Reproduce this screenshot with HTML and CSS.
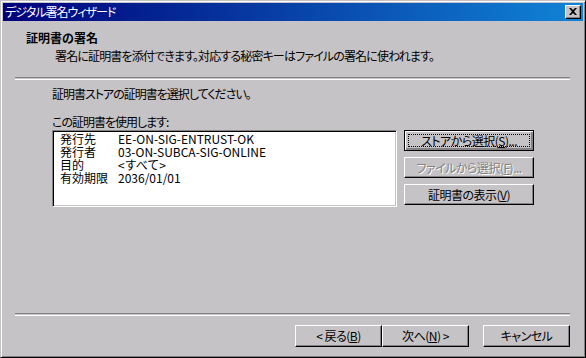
FILE: index.html
```html
<!DOCTYPE html>
<html lang="ja">

<head>
  <meta charset="UTF-8" />
  <title>デジタル署名ウィザード</title>
  <link rel="stylesheet" href="styles.css">
</head>

<body>
  <div class="window">
    <div class="titlebar">
      <span class="title">デジタル署名ウィザード</span>
      <span class="close">
        <svg width="8" height="7" viewBox="0 0 8 7">
          <path d="M0 0h2l2 2 2-2h2L5 3.5 8 7H6L4 5 2 7H0l3-3.5z" fill="#000" />
        </svg>
      </span>
    </div>
    <div class="content">
      <div class="header">
        <div class="heading">証明書の署名</div>
        <div class="subheading">署名に証明書を添付できます。対応する秘密キーはファイルの署名に使われます。</div>
      </div>
      <div class="rule"></div>
      <div class="main">
        <div class="intro">証明書ストアの証明書を選択してください。</div>
        <div class="label">この証明書を使用します:</div>
        <div class="cert-row">
          <div class="cert-box">
            <div class="cert-line"><span class="key">発行先</span><span>EE-ON-SIG-ENTRUST-OK</span></div>
            <div class="cert-line"><span class="key">発行者</span><span>03-ON-SUBCA-SIG-ONLINE</span></div>
            <div class="cert-line"><span class="key">目的</span><span>&lt;すべて&gt;</span></div>
            <div class="cert-line"><span class="key">有効期限</span><span>2036/01/01</span></div>
          </div>
          <div class="side-buttons">
            <button class="btn default"><span class="focus">ストアから選択(<u>S</u>)...</span></button>
            <button class="btn" disabled>ファイルから選択(<u>F</u>)...</button>
            <button class="btn">証明書の表示(<u>V</u>)</button>
          </div>
        </div>
      </div>
      <div class="rule"></div>
      <div class="footer">
        <div class="nav">
          <button class="btn wide">&lt; 戻る(<u>B</u>)</button>
          <button class="btn wide">次へ(<u>N</u>) &gt;</button>
        </div>
        <button class="btn wide">キャンセル</button>
      </div>
    </div>
  </div>
</body>

</html>
```

FILE: styles.css
```css
body {
  margin: 0;
  background: #c6c3c6;
  font-family: "Noto Sans CJK JP", sans-serif;
  font-size: 12px;
  color: #000;
}

.window {
  width: 586px;
  height: 358px;
  box-sizing: border-box;
  padding: 2px;
  border: 1px solid;
  border-color: #c6c3c6 #000 #000 #c6c3c6;
  box-shadow: inset 1px 1px #fff, inset -1px -1px #848284;
  background: #c6c3c6;
  display: flex;
  flex-direction: column;
}

.titlebar {
  height: 18px;
  flex: none;
  background: linear-gradient(to right, #00007b, #1084d6);
  display: flex;
  align-items: center;
  justify-content: space-between;
  padding: 0 2px;
}

.title {
  color: #fff;
  line-height: 18px;
  font-feature-settings: "palt";
  letter-spacing: -1px;
}

.close {
  width: 16px;
  height: 14px;
  box-sizing: border-box;
  background: #c6c3c6;
  border: 1px solid;
  border-color: #fff #000 #000 #fff;
  box-shadow: inset -1px -1px #848284;
  display: flex;
  align-items: center;
  justify-content: center;
  padding: 0 1px 1px 0;
}

.content {
  flex: 1;
  display: flex;
  flex-direction: column;
}

.header {
  padding: 10px 0 0 23px;
  height: 46px;
}

.heading {
  font-weight: bold;
  line-height: 14px;
}

.subheading {
  margin: 4px 0 0 29px;
  line-height: 14px;
  font-feature-settings: "palt";
  letter-spacing: -0.85px;
}

.rule {
  margin: 0 13px 0 12px;
  height: 1px;
  border-top: 1px solid #848284;
  border-bottom: 1px solid #fff;
}

.main {
  padding: 7px 0 0 49px;
  height: 226px;
}

.intro,
.label {
  line-height: 14px;
  font-feature-settings: "palt";
  letter-spacing: -1px;
}

.label {
  margin-top: 14px;
}

.cert-row {
  display: flex;
  align-items: flex-start;
  gap: 7px;
  margin-top: 1px;
}

.cert-box {
  width: 345px;
  height: 77px;
  box-sizing: border-box;
  background: #fff;
  border: 1px solid;
  border-color: #848284 #fff #fff #848284;
  box-shadow: inset 1px 1px #000, inset -1px -1px #c6c3c6;
  padding: 1px 0 0 7px;
}

.cert-line {
  line-height: 13px;
  height: 13px;
  display: flex;
}

.cert-line .key {
  min-width: 58px;
}

.side-buttons {
  display: flex;
  flex-direction: column;
  gap: 6px;
}

.btn {
  font: inherit;
  color: #000;
  background: #c6c3c6;
  width: 130px;
  height: 21px;
  padding: 0;
  border: 1px solid;
  border-color: #fff #000 #000 #fff;
  box-shadow: inset -1px -1px #848284;
  font-feature-settings: "palt";
  letter-spacing: -0.5px;
  line-height: 14px;
}

.btn u {
  text-underline-offset: 1px;
}

.btn.default {
  border-color: #000;
  box-shadow: inset 1px 1px #fff, inset -2px -2px #848284, inset -1px -1px #000;
  padding: 3px;
}

.btn .focus {
  display: flex;
  align-items: center;
  justify-content: center;
  height: 100%;
  box-sizing: border-box;
  border: 1px dotted #000;
}

.btn:disabled {
  color: #848284;
  text-shadow: 1px 1px #fff;
}

.footer {
  display: flex;
  justify-content: flex-end;
  gap: 14px;
  padding: 9px 13px 0 0;
}

.nav {
  display: flex;
}

.btn.wide {
  width: 87px;
  height: 22px;
}
```
